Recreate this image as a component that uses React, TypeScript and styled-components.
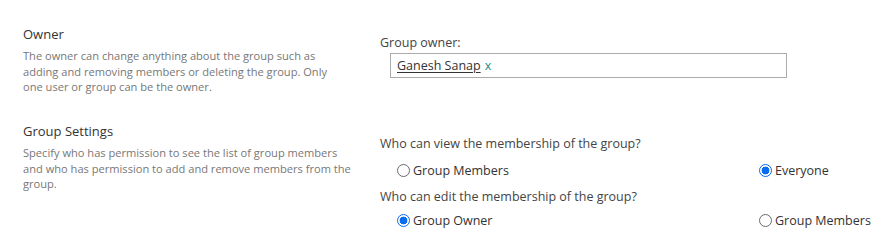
import styled, { createGlobalStyle } from "styled-components";

const GlobalStyle = createGlobalStyle`
  html, body {
    margin: 0;
    padding: 0;
    background: #ffffff;
  }
  body {
    font-family: "Open Sans", "Noto Sans", "Liberation Sans", sans-serif;
    color: #444444;
  }
`;

const Page = styled.div`
  padding: 25px 0 0 23px;
  width: 872px;
  box-sizing: border-box;
`;

const Section = styled.div<{ $minHeight: number }>`
  display: grid;
  grid-template-columns: 357px 1fr;
  min-height: ${(p) => p.$minHeight}px;
`;

const Info = styled.div`
  display: flex;
  flex-direction: column;
  gap: 5px;
`;

const Title = styled.div`
  font-size: 13px;
  line-height: 18px;
  color: #333333;
`;

const Description = styled.div<{ $width: number }>`
  font-size: 11.1px;
  line-height: 15.5px;
  color: #777777;
  width: ${(p) => p.$width}px;
`;

const Fields = styled.div<{ $top: number }>`
  padding-top: ${(p) => p.$top}px;
  display: flex;
  flex-direction: column;
`;

const Label = styled.div`
  font-size: 12.5px;
  line-height: 18px;
  color: #444444;
`;

const PeopleBox = styled.div`
  margin: 1px 0 0 10px;
  width: 397px;
  height: 25px;
  box-sizing: border-box;
  border: 1px solid #ababab;
  display: flex;
  align-items: center;
  padding-left: 6px;
  font-size: 12.5px;
  gap: 4px;
`;

const Person = styled.span`
  color: #333333;
  text-decoration: underline;
  text-underline-offset: 2px;
`;

const Remove = styled.span`
  color: #1f8a8a;
`;

const Options = styled.div<{ $top: number; $bottom: number }>`
  display: grid;
  grid-template-columns: 362px auto;
  padding-left: 17px;
  height: 22px;
  align-items: center;
  margin: ${(p) => p.$top}px 0 ${(p) => p.$bottom}px;
`;

const Option = styled.label`
  display: flex;
  align-items: center;
  gap: 2px;
  font-size: 12.5px;
  color: #333333;
`;

const Radio = styled.span<{ $checked?: boolean }>`
  width: 13px;
  height: 13px;
  box-sizing: border-box;
  border-radius: 50%;
  border: 1px solid ${(p) => (p.$checked ? "#0a6cf0" : "#6b6b6b")};
  background: ${(p) =>
    p.$checked
      ? "radial-gradient(circle, #0a6cf0 0 3.6px, #ffffff 4.2px)"
      : "#ffffff"};
  margin-right: 1px;
  flex: none;
`;

const Question = styled.div`
  font-size: 12.5px;
  line-height: 18px;
  color: #444444;
`;

export default function App() {
  return (
    <>
      <GlobalStyle />
      <Page>
        <Section $minHeight={97}>
          <Info>
            <Title>Owner</Title>
            <Description $width={316}>
              The owner can change anything about the group such as adding and
              removing members or deleting the group. Only one user or group can
              be the owner.
            </Description>
          </Info>
          <Fields $top={9}>
            <Label>Group owner:</Label>
            <PeopleBox>
              <Person>Ganesh Sanap</Person>
              <Remove>x</Remove>
            </PeopleBox>
          </Fields>
        </Section>
        <Section $minHeight={120}>
          <Info>
            <Title>Group Settings</Title>
            <Description $width={335}>
              Specify who has permission to see the list of group members and
              who has permission to add and remove members from the group.
            </Description>
          </Info>
          <Fields $top={13}>
            <Question>Who can view the membership of the group?</Question>
            <Options $top={6} $bottom={7}>
              <Option>
                <Radio />
                Group Members
              </Option>
              <Option>
                <Radio $checked />
                Everyone
              </Option>
            </Options>
            <Question>Who can edit the membership of the group?</Question>
            <Options $top={3} $bottom={0}>
              <Option>
                <Radio $checked />
                Group Owner
              </Option>
              <Option>
                <Radio />
                Group Members
              </Option>
            </Options>
          </Fields>
        </Section>
      </Page>
    </>
  );
}
